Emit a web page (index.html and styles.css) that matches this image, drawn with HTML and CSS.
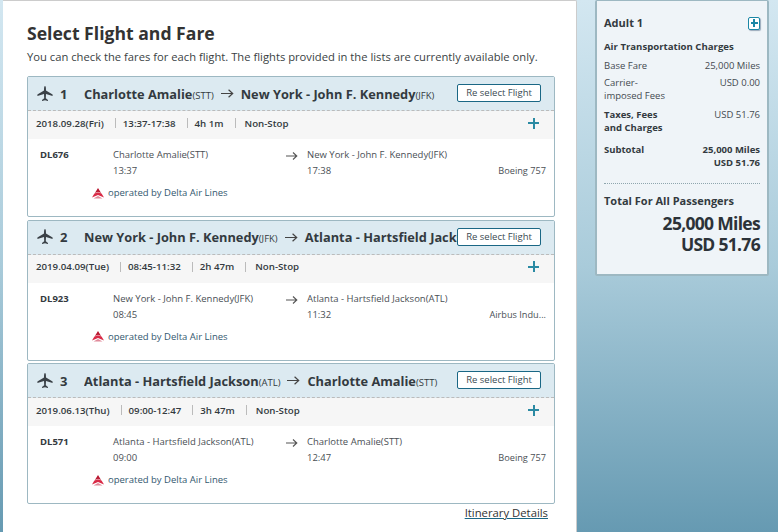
FILE: index.html
```html
<!DOCTYPE html>
<html lang="en">
<head>
<meta charset="utf-8">
<title>Select Flight and Fare</title>
<link rel="stylesheet" href="styles.css">
</head>
<body>
<svg class="defs" width="0" height="0" aria-hidden="true">
  <symbol id="plane" viewBox="0 0 16 16">
    <path d="M7.200 1.200C7.400.4 7.700 0 8 0s.6.4.8 1.200c.1.5.2 1.600.2 3.300l6.600 3.900v1.500L9 8l-.2 4.200 2.200 1.700V15l-3-.8-3 .8v-1.100l2.200-1.700L7 8 .4 9.900V8.400L7 4.500c0-1.700.1-2.800.2-3.300z" fill="#3a4147"/>
  </symbol>
  <symbol id="delta" viewBox="0 0 12 11">
    <path d="M6 0l3.100 5L6 3.800 2.900 5z" fill="#b8162f"/>
    <path d="M2.400 5.600L6 4.200l3.600 1.400L12 9.600 6 6.900 0 9.600z" fill="#d92b47"/>
    <path d="M1.500 10.500L6 7.900l4.500 2.600z" fill="#e08a9a"/>
  </symbol>
  <symbol id="arrow" viewBox="0 0 12 10">
    <path d="M0 5h10.500M7 1.500L10.800 5 7 8.500" fill="none" stroke="currentColor" stroke-width="1.100"/>
  </symbol>
</svg>
<div class="page">
  <main class="main">
    <h1 class="title">Select Flight and Fare</h1>
    <p class="intro">You can check the fares for each flight. The flights provided in the lists are currently available only.</p>

    <section class="card">
      <header class="card-head">
        <svg class="plane"><use href="#plane"/></svg>
        <span class="num">1</span>
        <div class="route">Charlotte Amalie<small>(STT)</small><svg class="route-arrow"><use href="#arrow"/></svg>New York - John F. Kennedy<small>(JFK)</small></div>
        <button class="reselect">Re select Flight</button>
      </header>
      <div class="summary">
        <span class="date">2018.09.28(Fri)</span><span class="item">13:37-17:38</span><span class="item">4h 1m</span><span class="item last">Non-Stop</span>
        <span class="plus"></span>
      </div>
      <div class="leg">
        <div class="code">DL676</div>
        <div class="stop from">Charlotte Amalie(STT)<br>13:37</div>
        <svg class="leg-arrow"><use href="#arrow"/></svg>
        <div class="stop">New York - John F. Kennedy(JFK)<br>17:38</div>
        <div class="craft">Boeing 757</div>
      </div>
      <div class="operated"><svg class="delta"><use href="#delta"/></svg>operated by Delta Air Lines</div>
    </section>

    <section class="card">
      <header class="card-head">
        <svg class="plane"><use href="#plane"/></svg>
        <span class="num">2</span>
        <div class="route">New York - John F. Kennedy<small>(JFK)</small><svg class="route-arrow"><use href="#arrow"/></svg>Atlanta - Hartsfield Jackson<small>(ATL)</small></div>
        <button class="reselect">Re select Flight</button>
      </header>
      <div class="summary">
        <span class="date">2019.04.09(Tue)</span><span class="item">08:45-11:32</span><span class="item">2h 47m</span><span class="item last">Non-Stop</span>
        <span class="plus"></span>
      </div>
      <div class="leg">
        <div class="code">DL923</div>
        <div class="stop from">New York - John F. Kennedy(JFK)<br>08:45</div>
        <svg class="leg-arrow"><use href="#arrow"/></svg>
        <div class="stop">Atlanta - Hartsfield Jackson(ATL)<br>11:32</div>
        <div class="craft">Airbus Indu...</div>
      </div>
      <div class="operated"><svg class="delta"><use href="#delta"/></svg>operated by Delta Air Lines</div>
    </section>

    <section class="card">
      <header class="card-head">
        <svg class="plane"><use href="#plane"/></svg>
        <span class="num">3</span>
        <div class="route">Atlanta - Hartsfield Jackson<small>(ATL)</small><svg class="route-arrow"><use href="#arrow"/></svg>Charlotte Amalie<small>(STT)</small></div>
        <button class="reselect">Re select Flight</button>
      </header>
      <div class="summary">
        <span class="date">2019.06.13(Thu)</span><span class="item">09:00-12:47</span><span class="item">3h 47m</span><span class="item last">Non-Stop</span>
        <span class="plus"></span>
      </div>
      <div class="leg">
        <div class="code">DL571</div>
        <div class="stop from">Atlanta - Hartsfield Jackson(ATL)<br>09:00</div>
        <svg class="leg-arrow"><use href="#arrow"/></svg>
        <div class="stop">Charlotte Amalie(STT)<br>12:47</div>
        <div class="craft">Boeing 757</div>
      </div>
      <div class="operated"><svg class="delta"><use href="#delta"/></svg>operated by Delta Air Lines</div>
    </section>

    <div class="details-row"><a class="details" href="#">Itinerary Details</a></div>
  </main>

  <aside class="side">
    <div class="side-head"><h2 class="adult">Adult 1</h2><span class="expand"></span></div>
    <h3 class="charges">Air Transportation Charges</h3>
    <dl class="fare">
      <div class="fare-row"><dt>Base Fare</dt><dd>25,000 Miles</dd></div>
      <div class="fare-row"><dt>Carrier-<br>imposed Fees</dt><dd>USD 0.00</dd></div>
      <div class="fare-row"><dt class="strong">Taxes, Fees<br>and Charges</dt><dd>USD 51.76</dd></div>
      <div class="fare-row sub"><dt class="strong">Subtotal</dt><dd class="strong">25,000 Miles<br>USD 51.76</dd></div>
    </dl>
    <div class="total">
      <div class="total-label">Total For All Passengers</div>
      <div class="total-value">25,000 Miles<br>USD 51.76</div>
    </div>
  </aside>
</div>
</body>
</html>
```
FILE: styles.css
```css
* { box-sizing: border-box; }
html, body { margin: 0; height: 100%; }
body {
  width: 778px;
  height: 532px;
  overflow: hidden;
  font-family: "Open Sans", sans-serif;
  color: #333a40;
  background: linear-gradient(180deg, #d3e7f1 0%, #a9cbda 50%, #669ab2 100%);
}
.defs { position: absolute; }
.page { display: flex; align-items: flex-start; height: 532px; padding-left: 3px; }

.main {
  width: 574px;
  height: 532px;
  flex: none;
  background: #fff;
  border-top: 1px solid #ccc;
  border-right: 1px solid #ccc;
  border-top-right-radius: 2px;
  padding: 20px 21px 0 24px;
}
.title { margin: 0; font-size: 17.600px; line-height: 24px; font-weight: 700; color: #333; }
.intro { margin: 3px 0 0; font-size: 11.220px; line-height: 18px; color: #3a3f44; white-space: nowrap; }

.card {
  height: 141px;
  margin-top: 2.500px;
  border: 1px solid #9db8c2;
  border-radius: 2px;
  background: #fff;
}
.intro + .card { margin-top: 10px; }
.card-head {
  position: relative;
  display: flex;
  align-items: center;
  height: 34px;
  background: #dceaf1;
  border-bottom: 1px dashed #bbb;
  padding-left: 9px;
}
.plane { width: 16px; height: 16px; flex: none; }
.num { width: 31px; flex: none; padding-left: 7px; font-size: 13px; font-weight: 700; color: #333a40; }
.route {
  width: 373px;
  flex: none;
  overflow: hidden;
  white-space: nowrap;
  font-size: 12.800px;
  font-weight: 700;
  color: #333a40;
  display: flex;
  align-items: center;
}
.route small { font-size: 9.500px; font-weight: 400; margin-top: 3px; }
.route-arrow { width: 13px; height: 11px; margin: 0 7px; flex: none; color: #444; }
.reselect {
  position: absolute;
  left: 429px;
  top: 7px;
  width: 84px;
  height: 18px;
  padding: 0;
  background: #fff;
  border: 1px solid #1a6785;
  border-radius: 2px;
  font: 400 9.500px/16px "Open Sans", sans-serif;
  color: #3a4a52;
}
.summary {
  display: flex;
  align-items: center;
  height: 28px;
  padding-bottom: 4px;
  background: #f6f6f6;
  padding-left: 8px;
  font-size: 9.700px;
  font-weight: 600;
  color: #333a40;
}
.summary .item { margin-left: 11px; padding-left: 8px; background: linear-gradient(#bbb, #bbb) left center / 1px 10px no-repeat; }
.summary .item.last { padding-left: 10px; }
.plus { position: relative; width: 11px; height: 11px; margin-left: auto; margin-right: 15px; }
.plus::before, .plus::after { content: ""; position: absolute; background: #2b8aa3; }
.plus::before { left: 0; right: 0; top: 4.500px; height: 2px; }
.plus::after { top: 0; bottom: 0; left: 4.500px; width: 2px; }

.leg { display: flex; height: 41px; padding-top: 8px; font-size: 9.500px; line-height: 16px; color: #4a4f55; }
.code { width: 85px; padding-left: 12px; font-weight: 700; color: #333a40; }
.stop { white-space: nowrap; }
.stop.from { width: 173px; }
.leg-arrow { width: 12px; height: 10px; margin: 4px 9px 0 0; color: #555; flex: none; }
.craft { margin-left: auto; padding: 16px 8px 0 0; font-size: 9.200px; }
.operated { display: flex; align-items: center; padding-left: 64px; margin-top: 6px; font-size: 9.500px; line-height: 14px; color: #33586f; }
.delta { width: 12px; height: 11px; margin-right: 4px; flex: none; }

.details-row { display: flex; justify-content: flex-end; padding: 1px 7px 0 0; }
.details { font-size: 11.300px; line-height: 16px; color: #333; text-decoration-color: #1a6785; }

.side {
  width: 174px;
  height: 276px;
  margin-left: 18px;
  flex: none;
  background: #eff4f8;
  border: 2px solid #9db8c2;
  border-top-width: 1px;
  border-radius: 2px;
  padding: 12px 7px 0 7px;
  font-size: 9.500px;
  line-height: 13px;
  color: #444a50;
}
.side-head { display: flex; justify-content: space-between; align-items: center; height: 18px; }
.adult { margin: 0; font-size: 11px; font-weight: 700; color: #333a40; }
.expand { position: relative; width: 12px; height: 13px; border: 1.500px solid #1b87a6; border-radius: 2px; margin-top: 2px; background: #fff; box-shadow: 1px 1px 1px #9ab; }
.expand::before, .expand::after { content: ""; position: absolute; background: #1b87a6; }
.expand::before { left: 1.500px; right: 1.500px; top: 4px; height: 2px; }
.expand::after { top: 1.500px; bottom: 1.500px; left: 3.500px; width: 2px; }
.charges { margin: 9px 0 0; font-size: 9.600px; line-height: 13px; font-weight: 700; color: #333a40; }
.fare { margin: 6px 0 0; }
.fare-row { display: flex; justify-content: space-between; margin-bottom: 6px; }
.fare-row:first-child { margin-bottom: 4px; }
.fare-row.sub { margin-top: 9px; margin-bottom: 0; }
.fare dt, .fare dd { margin: 0; }
.fare dd { text-align: right; }
.strong { font-weight: 700; color: #333a40; }
.total { margin-top: 14px; border-top: 1px dotted #8fa6ae; padding-top: 9px; }
.total-label { font-size: 11px; line-height: 16px; font-weight: 700; color: #333a40; }
.total-value { margin-top: 4px; text-align: right; font-size: 17.500px; line-height: 21px; font-weight: 700; letter-spacing: -.7px; color: #2c3238; }
```
